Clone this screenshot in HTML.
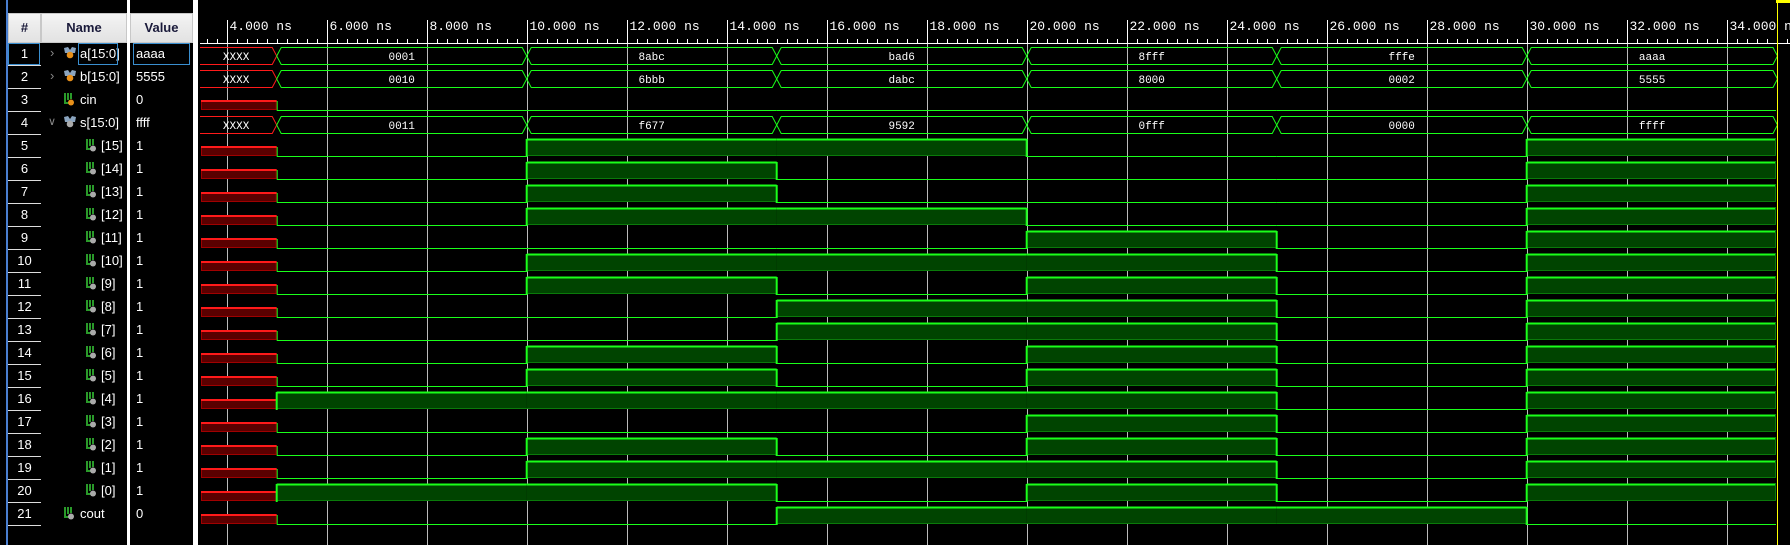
<!DOCTYPE html>
<html><head><meta charset="utf-8">
<style>
html,body{margin:0;padding:0;width:1790px;height:545px;overflow:hidden;background:#000;}
#root{position:relative;width:1790px;height:545px;background:#000;font-family:"Liberation Sans",sans-serif;}
.abs{position:absolute;}
.hdr{position:absolute;top:13px;height:30px;background:linear-gradient(#f4f4f4,#e2e2e2);border:1px solid #c8c8c8;box-sizing:border-box;font-weight:bold;font-size:13px;color:#1a1a3a;text-align:center;line-height:28px;}
.num{position:absolute;left:8px;width:33px;text-align:center;color:#fff;font-size:13px;}
.nm{position:absolute;color:#fff;font-size:13px;}
.val{position:absolute;left:136px;color:#fff;font-size:13px;}
.sep{position:absolute;left:8px;width:33px;height:1px;background:#ddd;}
</style></head><body>
<div id="root">
<div class="abs" style="left:6px;top:0;width:2px;height:545px;background:#4a7fd0"></div>
<div class="abs" style="left:127px;top:0;width:3px;height:545px;background:#fff"></div>
<div class="abs" style="left:193px;top:0;width:5px;height:545px;background:#fff"></div>
<div class="hdr" style="left:8px;width:33px">#</div>
<div class="hdr" style="left:41px;width:86px">Name</div>
<div class="hdr" style="left:130px;width:63px">Value</div>
<div id="rows"></div>
<svg id="w" class="abs" style="left:0;top:0" width="1790" height="545"></svg>
</div>
<script>
(function(){
var rows=document.getElementById('rows');
var names=[["a[15:0]","bus",">"],["b[15:0]","bus",">"],["cin","in",""],["s[15:0]","busg","v"]];
for(var i=15;i>=0;i--)names.push(["["+i+"]","bit",""]);
names.push(["cout","out",""]);
var vals=["aaaa","5555","0","ffff"];for(var i=0;i<16;i++)vals.push("1");vals.push("0");
var h='';
function icon(x,y,t){
 if(t=="bus"||t=="busg"){var c=t=="bus"?"#e8901a":"#aaa";
  return '<svg class="abs" style="left:'+x+'px;top:'+y+'px" width="12" height="12"><path d="M0 1 L4 0 L6 3 L8 0 L12 1 L11 6 L1 6 Z" fill="#8aa4bf"/><circle cx="6" cy="8" r="3.3" fill="'+c+'"/></svg>';}
 var c=t=="in"?"#e8901a":"#aaa";
 return '<svg class="abs" style="left:'+x+'px;top:'+y+'px" width="11" height="13"><path d="M1 0 V10 H5 M4 0 V7 M7 0 V6" stroke="#2a9a2a" stroke-width="2" fill="none"/><circle cx="7" cy="9.5" r="3" fill="'+c+'"/></svg>';
}
for(var k=0;k<21;k++){
 var ry=43+23*k,cy=ry+11;
 h+='<div class="num" style="top:'+(cy-8)+'px">'+(k+1)+'</div>';
 h+='<div class="sep" style="top:'+(ry+22)+'px"></div>';
 var n=names[k],nx,ix;
 if(n[1]=="bit"){ix=86;nx=101;}else{ix=64;nx=80;}
 if(n[2]==">")h+='<div class="nm" style="left:50px;top:'+(cy-9)+'px;color:#888">&#8250;</div>';
 if(n[2]=="v")h+='<div class="nm" style="left:48px;top:'+(cy-8)+'px;color:#888;font-size:11px">&#8744;</div>';
 h+=icon(ix,cy-7,n[1]);
 h+='<div class="nm" style="left:'+nx+'px;top:'+(cy-8)+'px">'+n[0]+'</div>';
 h+='<div class="val" style="top:'+(cy-8)+'px">'+vals[k]+'</div>';
}
h+='<div class="abs" style="left:8px;top:43px;width:32px;height:22px;border:1px solid #3a8fd0;box-sizing:border-box"></div>';
h+='<div class="abs" style="left:78px;top:43px;width:40px;height:22px;border:1px solid #3a8fd0;box-sizing:border-box"></div>';
h+='<div class="abs" style="left:133px;top:43px;width:57px;height:22px;border:1px solid #3a8fd0;box-sizing:border-box"></div>';
rows.innerHTML=h;

var X=function(t){return 26.7+50*t;};
var s='';
var x0=200,xe=1776;
s+='<line x1="'+x0+'" y1="43.5" x2="1790" y2="43.5" stroke="#fff"/>';
for(var t=3.6;t<=35.2;t+=0.2){var x=Math.round(X(t))+0.5;if(x<x0)continue;s+='<line x1="'+x+'" y1="39" x2="'+x+'" y2="43" stroke="#fff"/>';}
for(var t=4;t<=34;t+=2){var x=Math.round(X(t))+0.5;
 s+='<line x1="'+x+'" y1="20" x2="'+x+'" y2="43" stroke="#fff"/>';
 s+='<line x1="'+x+'" y1="44" x2="'+x+'" y2="545" stroke="#bbb"/>';
 s+='<text x="'+(x+2)+'" y="30" fill="#fff" font-family="Liberation Mono,monospace" font-size="13">'+t+'.000 ns</text>';}
var segT=[3.47,5,10,15,20,25,30,35];
var A=["XXXX","0001","8abc","bad6","8fff","fffe","aaaa"];
var B=["XXXX","0010","6bbb","dabc","8000","0002","5555"];
var S=["XXXX","0011","f677","9592","0fff","0000","ffff"];
var G="#1aff1a",R="#ff1a1a";
function bus(k,v){var y1=47+23*k+0.5,y2=64+23*k+0.5,m=(y1+y2)/2;
 for(var i=0;i<7;i++){var a=i==0?x0:X(segT[i])+4.5,b=X(segT[i+1])-4.5;if(i==6)b=xe-3;
  if(i==0){s+='<path d="M'+x0+' '+y1+' L'+b+' '+y1+' L'+(b+4.5)+' '+m+' L'+b+' '+y2+' L'+x0+' '+y2+'" fill="none" stroke="'+R+'"/>';}
  else s+='<path d="M'+(a-4.5)+' '+m+' L'+a+' '+y1+' L'+b+' '+y1+' L'+(b+4.5)+' '+m+' L'+b+' '+y2+' L'+a+' '+y2+' Z" fill="none" stroke="'+G+'"/>';
  s+='<text x="'+((a+b)/2)+'" y="'+(m+4)+'" fill="#fff" text-anchor="middle" font-family="Liberation Mono,monospace" font-size="11">'+v[i]+'</text>';}
}
function bit(k,v){var y1=47+23*k,y2=64+23*k;
 s+='<rect x="201.5" y="'+(y2-8.5)+'" width="'+(X(5)-202)+'" height="8" fill="#5a0000" stroke="#a00000"/>';
 s+='<line x1="201" y1="'+(y2-9)+'" x2="'+X(5)+'" y2="'+(y2-9)+'" stroke="'+R+'" stroke-width="2"/>';
 for(var i=1;i<7;i++){var a=X(segT[i]),b=i==6?xe:X(segT[i+1]);
  if(v[i]){s+='<rect x="'+a+'" y="'+y1+'" width="'+(b-a)+'" height="'+(y2-y1)+'" fill="#004400"/>';
   s+='<line x1="'+a+'" y1="'+(y2-0.5)+'" x2="'+b+'" y2="'+(y2-0.5)+'" stroke="#0a7a0a"/>';
   s+='<line x1="'+a+'" y1="'+(y1+0.5)+'" x2="'+b+'" y2="'+(y1+0.5)+'" stroke="'+G+'" stroke-width="2"/>';
   if(i==6) s+='<line x1="'+(b-0.5)+'" y1="'+y1+'" x2="'+(b-0.5)+'" y2="'+y2+'" stroke="#0a7a0a"/>';}
  else s+='<line x1="'+a+'" y1="'+(y2+0.5)+'" x2="'+b+'" y2="'+(y2+0.5)+'" stroke="'+G+'"/>';
  if(i>1&&v[i-1]!=v[i]||i==1&&v[i]) s+='<line x1="'+a+'" y1="'+y1+'" x2="'+a+'" y2="'+(y2+1)+'" stroke="'+G+'" stroke-width="2"/>';
  else if(i==1) s+='<line x1="'+(a+0.5)+'" y1="'+(y2-9)+'" x2="'+(a+0.5)+'" y2="'+y2+'" stroke="'+G+'"/>';
 }}
bus(0,A);bus(1,B);bit(2,[0,0,0,0,0,0,0]);bus(3,S);
for(var b=15;b>=0;b--){var v=[0];for(var i=1;i<7;i++)v.push((parseInt(S[i],16)>>b)&1);bit(4+15-b,v);}
var co=[0];for(var i=1;i<7;i++)co.push((parseInt(A[i],16)+parseInt(B[i],16))>>16&1);bit(20,co);
s+='<line x1="1777.5" y1="0" x2="1777.5" y2="545" stroke="#ffff00"/>';
s+='<rect x="1776" y="0" width="14" height="3" fill="#ffff00"/>';
document.getElementById('w').innerHTML=s;
})();
</script>
</body></html>
